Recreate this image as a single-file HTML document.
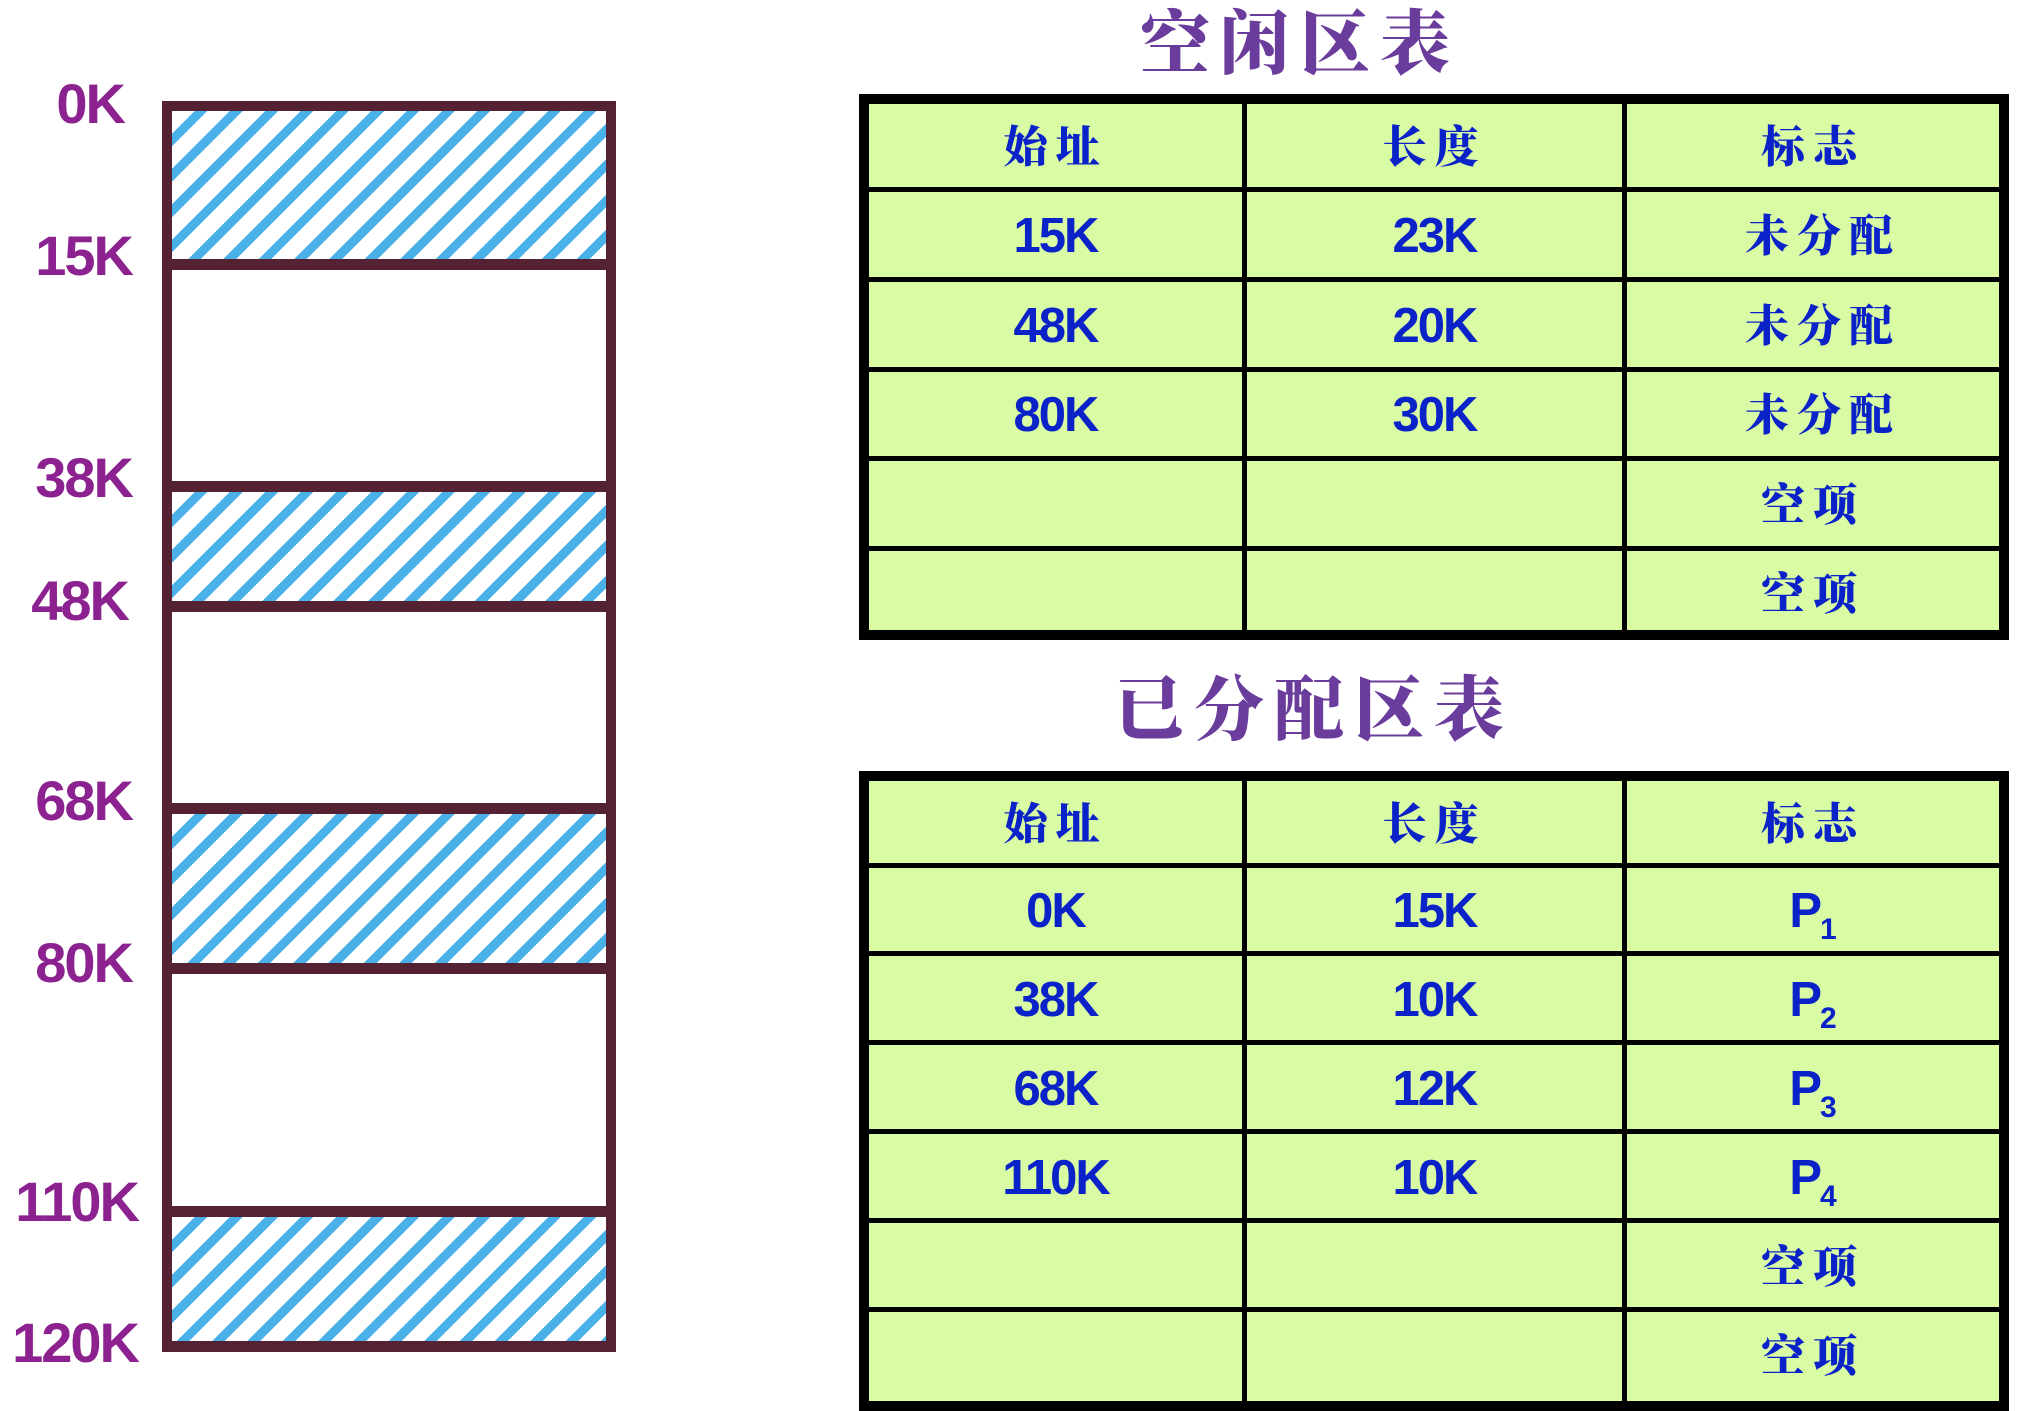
<!DOCTYPE html>
<html><head><meta charset="utf-8"><style>
body{margin:0;width:2038px;height:1410px;background:#fff;position:relative;overflow:hidden;font-family:"Liberation Sans","Noto Sans CJK SC",sans-serif}
.a{position:absolute}
.lbl{position:absolute;color:#8B2290;font-weight:bold;font-size:56px;letter-spacing:-2px;line-height:1;text-align:right;width:140px}
.hatch{position:absolute;left:172px;width:434px;background:repeating-linear-gradient(135deg,#fff 0px,#fff 16px,#4AB0E8 16px,#4AB0E8 25px)}
.bar{position:absolute;left:162px;width:454px;height:11px;background:#552234}
.tb{position:absolute;left:859px;width:1130px;border:10px solid #000;background:#D9FBA4}
.vl{position:absolute;top:0;bottom:0;width:5px;background:#000}
.hl{position:absolute;left:0;right:0;height:5px;background:#000}
.c{position:absolute;text-align:center;color:#0A22C8;font-weight:bold;line-height:1}
.n{font-size:49px;letter-spacing:-2px}
.z{font-size:44px;letter-spacing:8px;font-family:"Noto Serif CJK SC","Noto Sans CJK SC",serif;font-weight:900}
.t{position:absolute;color:#6A3C9C;font-family:"Noto Serif CJK SC","Noto Sans CJK SC",serif;font-weight:900;font-size:70px;letter-spacing:10px;line-height:1}
sub{font-size:30px;vertical-align:-12px;letter-spacing:0}
</style></head><body>
<div class="a" style="left:162px;top:101px;width:434px;height:1230px;border:10px solid #552234;border-bottom-width:11px"></div>
<div class="hatch" style="top:111px;height:148px"></div>
<div class="bar" style="top:259px"></div>
<div class="bar" style="top:481px"></div>
<div class="hatch" style="top:492px;height:109px"></div>
<div class="bar" style="top:601px"></div>
<div class="bar" style="top:803px"></div>
<div class="hatch" style="top:814px;height:149px"></div>
<div class="bar" style="top:963px"></div>
<div class="bar" style="top:1206px"></div>
<div class="hatch" style="top:1217px;height:124px"></div>

<div class="lbl" style="left:-16px;top:76px">0K</div>
<div class="lbl" style="left:-8px;top:228px">15K</div>
<div class="lbl" style="left:-8px;top:450px">38K</div>
<div class="lbl" style="left:-12px;top:573px">48K</div>
<div class="lbl" style="left:-8px;top:773px">68K</div>
<div class="lbl" style="left:-8px;top:935px">80K</div>
<div class="lbl" style="left:-2px;top:1174px">110K</div>
<div class="lbl" style="left:-2px;top:1315px">120K</div>

<div class="t" style="left:1140px;top:4px">空闲区表</div>
<div class="t" style="left:1114px;top:670px">已分配区表</div>

<div class="tb" style="top:94px;height:526px">
 <div class="vl" style="left:373px"></div><div class="vl" style="left:753px"></div>
 <div class="hl" style="top:83px"></div><div class="hl" style="top:173px"></div><div class="hl" style="top:263px"></div><div class="hl" style="top:352px"></div><div class="hl" style="top:442px"></div>
 <div class="c z" style="left:0;width:373px;top:17px">始址</div>
 <div class="c z" style="left:378px;width:375px;top:17px">长度</div>
 <div class="c z" style="left:758px;width:372px;top:17px">标志</div>
 <div class="c n" style="left:0;width:373px;top:108px">15K</div>
 <div class="c n" style="left:378px;width:375px;top:108px">23K</div>
 <div class="c z" style="left:768px;width:372px;top:106px">未分配</div>
 <div class="c n" style="left:0;width:373px;top:198px">48K</div>
 <div class="c n" style="left:378px;width:375px;top:198px">20K</div>
 <div class="c z" style="left:768px;width:372px;top:196px">未分配</div>
 <div class="c n" style="left:0;width:373px;top:287px">80K</div>
 <div class="c n" style="left:378px;width:375px;top:287px">30K</div>
 <div class="c z" style="left:768px;width:372px;top:285px">未分配</div>
 <div class="c z" style="left:758px;width:372px;top:375px">空项</div>
 <div class="c z" style="left:758px;width:372px;top:464px">空项</div>
</div>

<div class="tb" style="top:771px;height:620px">
 <div class="vl" style="left:373px"></div><div class="vl" style="left:753px"></div>
 <div class="hl" style="top:82px"></div><div class="hl" style="top:170px"></div><div class="hl" style="top:259px"></div><div class="hl" style="top:348px"></div><div class="hl" style="top:437px"></div><div class="hl" style="top:526px"></div>
 <div class="c z" style="left:0;width:373px;top:17px">始址</div>
 <div class="c z" style="left:378px;width:375px;top:17px">长度</div>
 <div class="c z" style="left:758px;width:372px;top:17px">标志</div>
 <div class="c n" style="left:0;width:373px;top:106px">0K</div>
 <div class="c n" style="left:378px;width:375px;top:106px">15K</div>
 <div class="c n" style="left:758px;width:372px;top:106px">P<sub>1</sub></div>
 <div class="c n" style="left:0;width:373px;top:195px">38K</div>
 <div class="c n" style="left:378px;width:375px;top:195px">10K</div>
 <div class="c n" style="left:758px;width:372px;top:195px">P<sub>2</sub></div>
 <div class="c n" style="left:0;width:373px;top:284px">68K</div>
 <div class="c n" style="left:378px;width:375px;top:284px">12K</div>
 <div class="c n" style="left:758px;width:372px;top:284px">P<sub>3</sub></div>
 <div class="c n" style="left:0;width:373px;top:373px">110K</div>
 <div class="c n" style="left:378px;width:375px;top:373px">10K</div>
 <div class="c n" style="left:758px;width:372px;top:373px">P<sub>4</sub></div>
 <div class="c z" style="left:758px;width:372px;top:460px">空项</div>
 <div class="c z" style="left:758px;width:372px;top:549px">空项</div>
</div>
</body></html>
